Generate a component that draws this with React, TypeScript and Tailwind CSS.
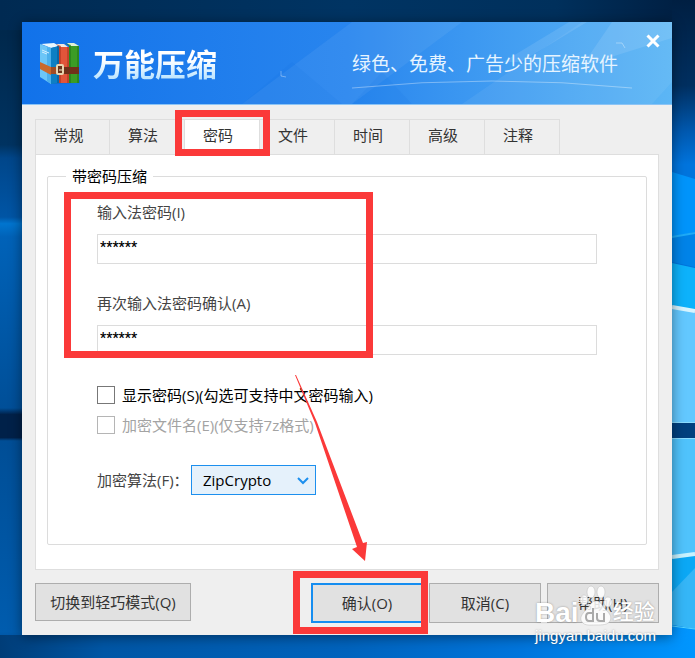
import type { ReactNode } from "react";

const tabs = ["常规", "算法", "密码", "文件", "时间", "高级", "注释"];

function Wallpaper() {
  return (
    <svg className="absolute inset-0 h-full w-full" viewBox="0 0 695 658" preserveAspectRatio="none" aria-hidden="true">
      <defs>
        <linearGradient id="left" x1="0" y1="0" x2="0" y2="1">
          <stop offset="0" stopColor="#002a52" />
          <stop offset="0.05" stopColor="#00284c" />
          <stop offset="0.22" stopColor="#003361" />
          <stop offset="0.24" stopColor="#00468a" />
          <stop offset="0.33" stopColor="#0055a5" />
          <stop offset="0.34" stopColor="#0075cf" />
          <stop offset="0.36" stopColor="#0062b8" />
          <stop offset="0.62" stopColor="#004f98" />
          <stop offset="0.63" stopColor="#002149" />
          <stop offset="0.665" stopColor="#002149" />
          <stop offset="0.67" stopColor="#004e96" />
          <stop offset="0.96" stopColor="#005cae" />
          <stop offset="1" stopColor="#003f80" />
        </linearGradient>
        <linearGradient id="right" x1="0" y1="0" x2="0" y2="1">
          <stop offset="0" stopColor="#001f42" />
          <stop offset="0.13" stopColor="#002f60" />
          <stop offset="0.2" stopColor="#0059b0" />
          <stop offset="0.25" stopColor="#0074dd" />
        </linearGradient>
        <linearGradient id="bottom" x1="0" y1="0" x2="1" y2="0">
          <stop offset="0" stopColor="#003d78" />
          <stop offset="0.15" stopColor="#0056a5" />
          <stop offset="0.5" stopColor="#0063bd" />
          <stop offset="0.75" stopColor="#0075dc" />
          <stop offset="1" stopColor="#0096ff" />
        </linearGradient>
        <linearGradient id="top" x1="0" y1="0" x2="1" y2="0">
          <stop offset="0" stopColor="#002a52" />
          <stop offset="0.5" stopColor="#003463" />
          <stop offset="0.8" stopColor="#00305c" />
          <stop offset="1" stopColor="#001d3f" />
        </linearGradient>
      </defs>
      <path fill="url(#left)" d="M0 0h300v658H0z" />
      <path fill="url(#top)" d="M0 0h695v30H0z" />
      <path fill="url(#right)" d="M672 0h23v658h-23z" />
      <path fill="#0094fb" d="M672 172l23 7v53l-23 5z" />
      <path fill="#0083e8" d="M672 237l23-4v34l-23-5z" />
      <path stroke="#1eabf8" strokeWidth="2" d="M672 237l23-4" />
      <path fill="#0db2fb" d="M672 263l23 5v43l-23-4z" />
      <path fill="#63c8ff" d="M672 307l23 4v112h-23z" />
      <path stroke="#d7f4ff" strokeWidth="4" d="M672 307l23 4" />
      <path fill="#00407f" d="M672 423h23v15h-23z" />
      <path stroke="#8bdcff" d="M672 422.500h23M672 438.500h23" />
      <path fill="#50c3fc" d="M672 439h23v118l-23 3z" />
      <path fill="#0ba8f5" d="M672 558l23-3v73l-23-4z" />
      <path stroke="#c7f2ff" strokeWidth="4" d="M672 557l23-3" />
      <path fill="#35b6f7" d="M672 592l23-24v61l-23-4z" />
      <path fill="url(#bottom)" d="M0 635h672v-10l23 4v29H0z" />
      <path stroke="#53d2ff" d="M672 626l23 3" />
    </svg>
  );
}

function BooksLogo() {
  return (
    <svg width="42" height="43" viewBox="0 0 42 43" aria-hidden="true">
      <path fill="#0d5fbd" opacity=".5" d="M3 36l10 6 28-1v-3z" />
      <path fill="#e8f6fd" d="M2 2l13-1 5 3-8 2z" />
      <path fill="#f3e6dc" d="M17 2h8l4 3h-8z" />
      <path fill="#dff1d5" d="M28 1h7l5 3h-9z" />
      <path fill="#6cc6f7" d="M1 2l11 4v36L1 35z" />
      <path fill="#4cb0ec" d="M8 5l4 1v36l-4-3z" />
      <path fill="#0d7fc4" d="M12 6l8-2v37l-8 1z" />
      <path fill="#0a68a8" d="M18 4h2v37h-2z" />
      <path fill="#e2553a" d="M20 5h10v36H20z" />
      <path fill="#b73b25" d="M20 5l-3-3 5 2v37h-2zM28 5h2v36h-2z" opacity=".7" />
      <path fill="#3b9c26" d="M30 4h10v37H30z" />
      <path fill="#257f1c" d="M30 4l-4-3 6 2v38h-2zM38 4h2v37h-2z" opacity=".7" />
      <path stroke="#d3efff" d="M3 8l7 3M3 10l5 2" />
      <path fill="#c9692d" d="M1 20l11 5v8L1 27z" />
      <path fill="#70301a" d="M12 25h28v7H12z" />
      <path fill="#a14d25" d="M12 25h8v7h-8z" />
      <rect x="18" y="23" width="6" height="9" rx="1" fill="#6b351c" stroke="#e8d3ae" strokeWidth="2" />
      <path stroke="#f5e5c8" strokeWidth="1" d="M20 28h3" />
    </svg>
  );
}

function Header() {
  return (
    <header className="relative flex h-[83px] items-start justify-between border-b border-[#8cc4f5] bg-linear-to-r from-[#1172ea] via-[#2885ee] to-[#5cb6f5]">
      <svg className="absolute inset-0 h-full w-full" viewBox="0 0 650 82" preserveAspectRatio="none" aria-hidden="true">
        <path fill="#fff" opacity=".06" d="M330 0h110L330 82H220zM560 0h90v60l-20 22H440z" />
        <path fill="#fff" opacity=".1" d="M547 0h18l-66 40h-18zM590 0h60v16l-90 28z" />
        <path fill="#0060dd" opacity=".08" d="M270 40l50 42H220zM360 50l30 32h-60z" />
        <path fill="none" stroke="#fff" opacity=".35" d="M330 66Q470 52 610 66" />
        <path fill="none" stroke="#fff" opacity=".35" d="M259 49v5l5 1M594 21l6 0 3 5" />
      </svg>
      <div className="relative flex items-center gap-3 pt-5 pl-[17px]">
        <BooksLogo />
        <h1 className="bg-linear-to-b from-white from-40% to-[#a5dcff] bg-clip-text text-[31px] leading-[42px] font-bold text-transparent">万能压缩</h1>
      </div>
      <div className="relative flex">
        <p className="pt-7 text-[19px] leading-[28px] text-[#e6f4ff]">绿色、免费、广告少的压缩软件</p>
        <button type="button" aria-label="关闭" className="mt-3 mr-3 ml-7 h-[14px] w-[14px]">
          <svg viewBox="0 0 14 14" className="h-full w-full" stroke="#fff" strokeWidth="3">
            <path d="M1.500 1.500l11 11M12.500 1.500l-11 11" />
          </svg>
        </button>
      </div>
    </header>
  );
}

function PasswordField({ id, label }: { id: string; label: string }) {
  return (
    <div>
      <label htmlFor={id} className="block text-[#444]">{label}</label>
      <input
        id={id}
        defaultValue="******"
        className="mt-3 block h-[30px] w-full border border-[#dcdcdc] bg-white px-0.5 pb-1 font-[Roboto] text-sm font-medium text-black outline-none"
      />
    </div>
  );
}

function Check({ id, label, disabled }: { id: string; label: string; disabled?: boolean }) {
  return (
    <div className="flex items-center gap-[7px]">
      <input
        id={id}
        type="checkbox"
        disabled={disabled}
        className="h-[18px] w-[18px] appearance-none border border-[#777] bg-white disabled:border-[#b5b5b5]"
      />
      <label htmlFor={id} className={disabled ? "text-[#a3a3a3]" : "text-black"}>{label}</label>
    </div>
  );
}

function FooterButton({ children, primary }: { children: ReactNode; primary?: boolean }) {
  return (
    <button
      type="button"
      className={`h-10 w-28 bg-[#e1e1e1] text-[#333] ${primary ? "border-2 border-[#158df0]" : "border border-[#adadad]"}`}
    >
      {children}
    </button>
  );
}

function Watermark() {
  return (
    <div className="pointer-events-none absolute right-4 -bottom-[10px] font-['Liberation_Sans','Noto_Sans_CJK_SC',sans-serif] text-white [text-shadow:0_0_2px_rgba(90,90,90,.6)]">
      <div className="flex items-end">
        <span className="text-[28px] leading-[28px] font-bold">Bai</span>
        <svg width="34" height="42" viewBox="0 0 34 42" fill="#fff" fillOpacity=".85" stroke="#bbb" strokeWidth=".5" aria-hidden="true">
          <ellipse cx="5" cy="15" rx="4" ry="5" />
          <ellipse cx="12" cy="7" rx="4" ry="6" />
          <ellipse cx="22" cy="7" rx="4" ry="6" />
          <ellipse cx="29" cy="17" rx="4" ry="5" />
          <path d="M17 16c5 0 6 5 10 9s6 7 4 11-8 4-14 4-11 1-14-3 0-8 4-12 5-9 10-9z" />
          <path fill="none" stroke="#aaa" strokeWidth="2" d="M14 23v13h-4q-3 0-3-4t3-4h4M18 28v5q0 3 3 3h4v-8" />
        </svg>
        <span className="text-[21px] leading-[30px] font-medium">经验</span>
      </div>
      <div className="text-[15px] leading-[18px]">jingyan.baidu.com</div>
    </div>
  );
}

export default function App() {
  return (
    <div className="relative min-h-screen overflow-hidden bg-[#004f98] px-[22px] pt-[22px] pb-[23px] font-['Open_Sans','Noto_Sans_CJK_SC',sans-serif] text-[15px] leading-5">
      <Wallpaper />
      <main className="relative mr-px bg-[#efefef] shadow-[0_2px_12px_rgba(0,0,0,.45)]">
        <Header />
        <div className="px-[13px] pt-[14px] pb-3">
          <div role="tablist" className="flex">
            {tabs.map((tab) => {
              const active = tab === "密码";
              return (
                <div key={tab} className="relative">
                  <button
                    type="button"
                    role="tab"
                    aria-selected={active}
                    className={`h-[35px] w-[75px] border-t border-r border-[#dedede] pr-2 pb-1 text-[#333] ${active ? "bg-white" : ""} ${tab === "常规" ? "border-l" : ""}`}
                  >
                    {tab}
                  </button>
                  {active && <div className="absolute -inset-x-[10px] -top-[9px] -bottom-[2px] z-10 border-[7px] border-[#fb3939]" />}
                </div>
              );
            })}
          </div>

          {/* Password page */}
          <div role="tabpanel" className="relative border border-[#dedede] bg-white px-[11px] pt-[11px] pb-6">
            <fieldset className="rounded-xs border border-[#dcdcdc] px-[49px] pb-[49px]">
              <legend className="-ml-[31px] px-[6px] text-black">带密码压缩</legend>
              <div className="relative mt-4 space-y-[29px]">
                <PasswordField id="password" label="输入法密码(I)" />
                <PasswordField id="confirm" label="再次输入法密码确认(A)" />
                <div className="pointer-events-none absolute -top-[10px] -bottom-[3px] -left-[33px] w-[309px] border-[7px] border-[#fb3939]" />
              </div>
              <div className="mt-[30px] space-y-[10px]">
                <Check id="show" label="显示密码(S)(勾选可支持中文密码输入)" />
                <Check id="names" label="加密文件名(E)(仅支持7z格式)" disabled />
              </div>
              <div className="mt-[30px] flex items-center">
                <label htmlFor="method" className="w-[94px] whitespace-nowrap text-[#444]">加密算法(F)：</label>
                <div className="relative">
                  <select id="method" className="h-[30px] w-[125px] appearance-none border border-[#1c8fee] bg-[#e5f1fb] px-[11px] text-black outline-none">
                    <option>ZipCrypto</option>
                  </select>
                  <svg className="pointer-events-none absolute top-3 right-[7px]" width="12" height="8" viewBox="0 0 12 8" fill="none" stroke="#1c8fee" strokeWidth="2" aria-hidden="true">
                    <path d="M1 1l5 5 5-5" />
                  </svg>
                </div>
              </div>
            </fieldset>
            <svg className="pointer-events-none absolute top-[220px] left-[259px]" width="74" height="187" viewBox="0 0 74 187" fill="#fb3939" aria-hidden="true">
              <path d="M0 0l1 0 21 47 46 121 4-1-2 19-13-12 5-2L20 48z" />
            </svg>
          </div>

          <footer className="flex items-start gap-[6px] pt-[13px]">
            <button type="button" className="mr-auto h-[38px] w-[156px] border border-[#adadad] bg-[#e1e1e1] text-[#333]">
              切换到轻巧模式(Q)
            </button>
            <div className="relative">
              <FooterButton primary>确认(O)</FooterButton>
              <div className="pointer-events-none absolute -top-[12px] -right-[5px] -bottom-[11px] -left-[18px] z-10 border-[7px] border-[#fb3939]" />
            </div>
            <FooterButton>取消(C)</FooterButton>
            <FooterButton>帮助(H)</FooterButton>
          </footer>
        </div>
        <Watermark />
      </main>
    </div>
  );
}
